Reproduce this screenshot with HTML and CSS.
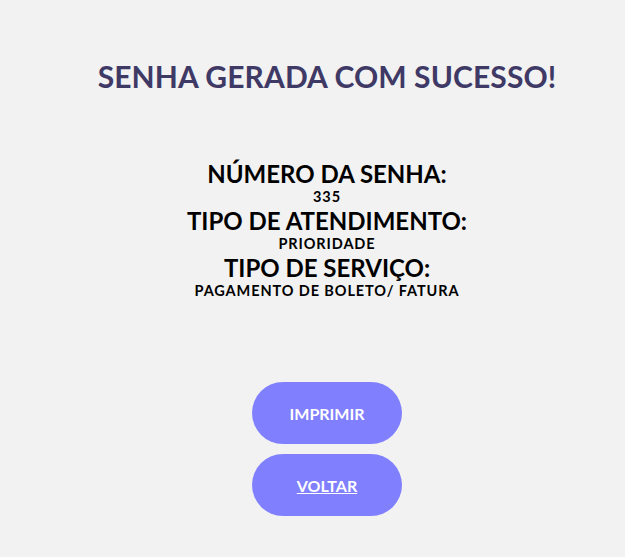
FILE: index.html
```html
<!DOCTYPE html>
<html lang="pt-BR">
<head>
<meta charset="utf-8">
<title>Senha gerada</title>
<link rel="stylesheet" href="styles.css">
</head>
<body>
<main class="page">
  <h1 class="title">SENHA GERADA COM SUCESSO!</h1>
  <section class="info">
    <h2 class="label">NÚMERO DA SENHA:</h2>
    <p class="value">335</p>
    <h2 class="label">TIPO DE ATENDIMENTO:</h2>
    <p class="value">PRIORIDADE</p>
    <h2 class="label">TIPO DE SERVIÇO:</h2>
    <p class="value">PAGAMENTO DE BOLETO/ FATURA</p>
  </section>
  <div class="actions">
    <button class="btn">IMPRIMIR</button>
    <a class="btn link" href="#">VOLTAR</a>
  </div>
</main>
</body>
</html>
```
FILE: styles.css
```css
html, body {
  margin: 0;
  padding: 0;
  background: #f2f2f2;
}
body {
  font-family: "Lato", "Open Sans", sans-serif;
}
.page {
  display: flex;
  flex-direction: column;
  align-items: center;
  padding-left: 29px;
  padding-top: 58px;
}
.title {
  margin: 0;
  font-size: 30px;
  font-weight: 700;
  line-height: 36px;
  color: #3f3966;
  letter-spacing: 0.1px;
}
.info {
  display: flex;
  flex-direction: column;
  align-items: center;
  margin-top: 65px;
  color: #000;
}
.label {
  margin: 0;
  font-size: 24px;
  font-weight: 700;
  line-height: 29px;
}
.value {
  margin: 0;
  font-size: 14.5px;
  font-weight: 700;
  line-height: 18px;
  letter-spacing: 0.9px;
}
.actions {
  display: flex;
  flex-direction: column;
  align-items: center;
  gap: 10px;
  margin-top: 82px;
}
.btn {
  display: flex;
  align-items: center;
  justify-content: center;
  width: 150px;
  height: 62px;
  border: none;
  border-radius: 31px;
  background: #8080ff;
  color: #fff;
  font-family: "Lato", "Open Sans", sans-serif;
  font-weight: 700;
  font-size: 16px;
  padding: 0;
  box-sizing: border-box;
}
.link {
  text-decoration: underline;
}
```
